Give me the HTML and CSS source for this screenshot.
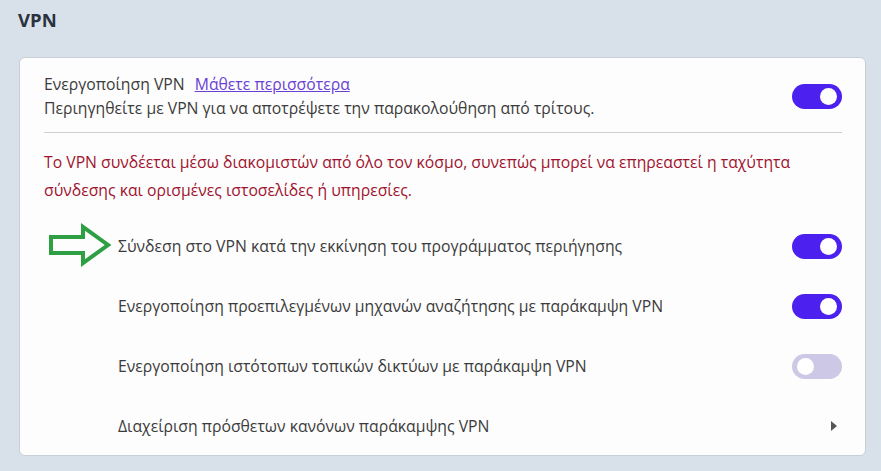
FILE: index.html
```html
<!DOCTYPE html>
<html lang="el">
<head>
    <meta charset="UTF-8">
    <meta name="viewport" content="width=device-width, initial-scale=1.0">
    <title>VPN</title>
    <link rel="stylesheet" href="styles.css">
</head>
<body>
    <div class="page">
        <h2 class="section-title">VPN</h2>
        <div class="card">
            <div class="main-row">
                <div class="main-text">
                    <div>Ενεργοποίηση VPN <a href="#" class="more">Μάθετε περισσότερα</a></div>
                    <div>Περιηγηθείτε με VPN για να αποτρέψετε την παρακολούθηση από τρίτους.</div>
                </div>
                <span class="toggle on"></span>
            </div>
            <div class="separator"></div>
            <p class="warning">Το VPN συνδέεται μέσω διακομιστών από όλο τον κόσμο, συνεπώς μπορεί να επηρεαστεί η ταχύτητα σύνδεσης και ορισμένες ιστοσελίδες ή υπηρεσίες.</p>
            <div class="option">
                <svg class="pointer" width="64" height="44" viewBox="0 0 64 44">
                    <path d="M3 14 H35 V4 L60 22 L35 40 V30 H3 Z" fill="none" stroke="#2ea043" stroke-width="4" stroke-linejoin="miter"/>
                </svg>
                <span class="option-label">Σύνδεση στο VPN κατά την εκκίνηση του προγράμματος περιήγησης</span>
                <span class="toggle on"></span>
            </div>
            <div class="option">
                <span class="option-label">Ενεργοποίηση προεπιλεγμένων μηχανών αναζήτησης με παράκαμψη VPN</span>
                <span class="toggle on"></span>
            </div>
            <div class="option">
                <span class="option-label">Ενεργοποίηση ιστότοπων τοπικών δικτύων με παράκαμψη VPN</span>
                <span class="toggle off"></span>
            </div>
            <div class="option">
                <span class="option-label">Διαχείριση πρόσθετων κανόνων παράκαμψης VPN</span>
                <span class="chevron"></span>
            </div>
        </div>
    </div>
</body>
</html>
```

FILE: styles.css
```css
body {
    font-family: 'Open Sans', 'DejaVu Sans', sans-serif;
    background-color: #d8e1ea;
    margin: 0;
    padding: 0;
    color: #3b3b3b;
    font-size: 15.75px;
}

.page {
    padding: 7px 15px 0 19px;
}

.section-title {
    font-size: 18.5px;
    font-weight: bold;
    color: #29323d;
    margin: 0 0 0 -1px;
    line-height: 25px;
    height: 50px;
}

.card {
    background-color: #fdfdfd;
    border: 1px solid #c9cfd6;
    border-radius: 6px;
    padding: 0 23px 0 24px;
    height: 399px;
    box-sizing: border-box;
}

.main-row {
    display: flex;
    align-items: center;
    justify-content: space-between;
    padding: 14px 0 12px;
    line-height: 24px;
}

.more {
    color: #6a3fd6;
    margin-left: 6px;
}

.separator {
    height: 1px;
    background-color: #cfcfcf;
}

.warning {
    color: #a0132e;
    line-height: 28px;
    margin: 15px 0 12px;
}

.option {
    position: relative;
    display: flex;
    align-items: center;
    justify-content: space-between;
    height: 60px;
    padding-left: 74px;
}

.pointer {
    position: absolute;
    left: 4px;
    top: 7px;
}

.toggle {
    width: 50px;
    height: 25px;
    border-radius: 13px;
    position: relative;
    flex-shrink: 0;
}

.toggle::after {
    content: '';
    position: absolute;
    top: 4px;
    width: 17px;
    height: 17px;
    border-radius: 50%;
    background-color: #fff;
}

.toggle.on {
    background-color: #4c20ef;
}

.toggle.on::after {
    right: 5px;
}

.toggle.off {
    background-color: #cdc8e6;
}

.toggle.off::after {
    left: 5px;
}

.chevron {
    width: 0;
    height: 0;
    border-top: 5px solid transparent;
    border-bottom: 5px solid transparent;
    border-left: 6px solid #555;
    margin-right: 5px;
}
```
